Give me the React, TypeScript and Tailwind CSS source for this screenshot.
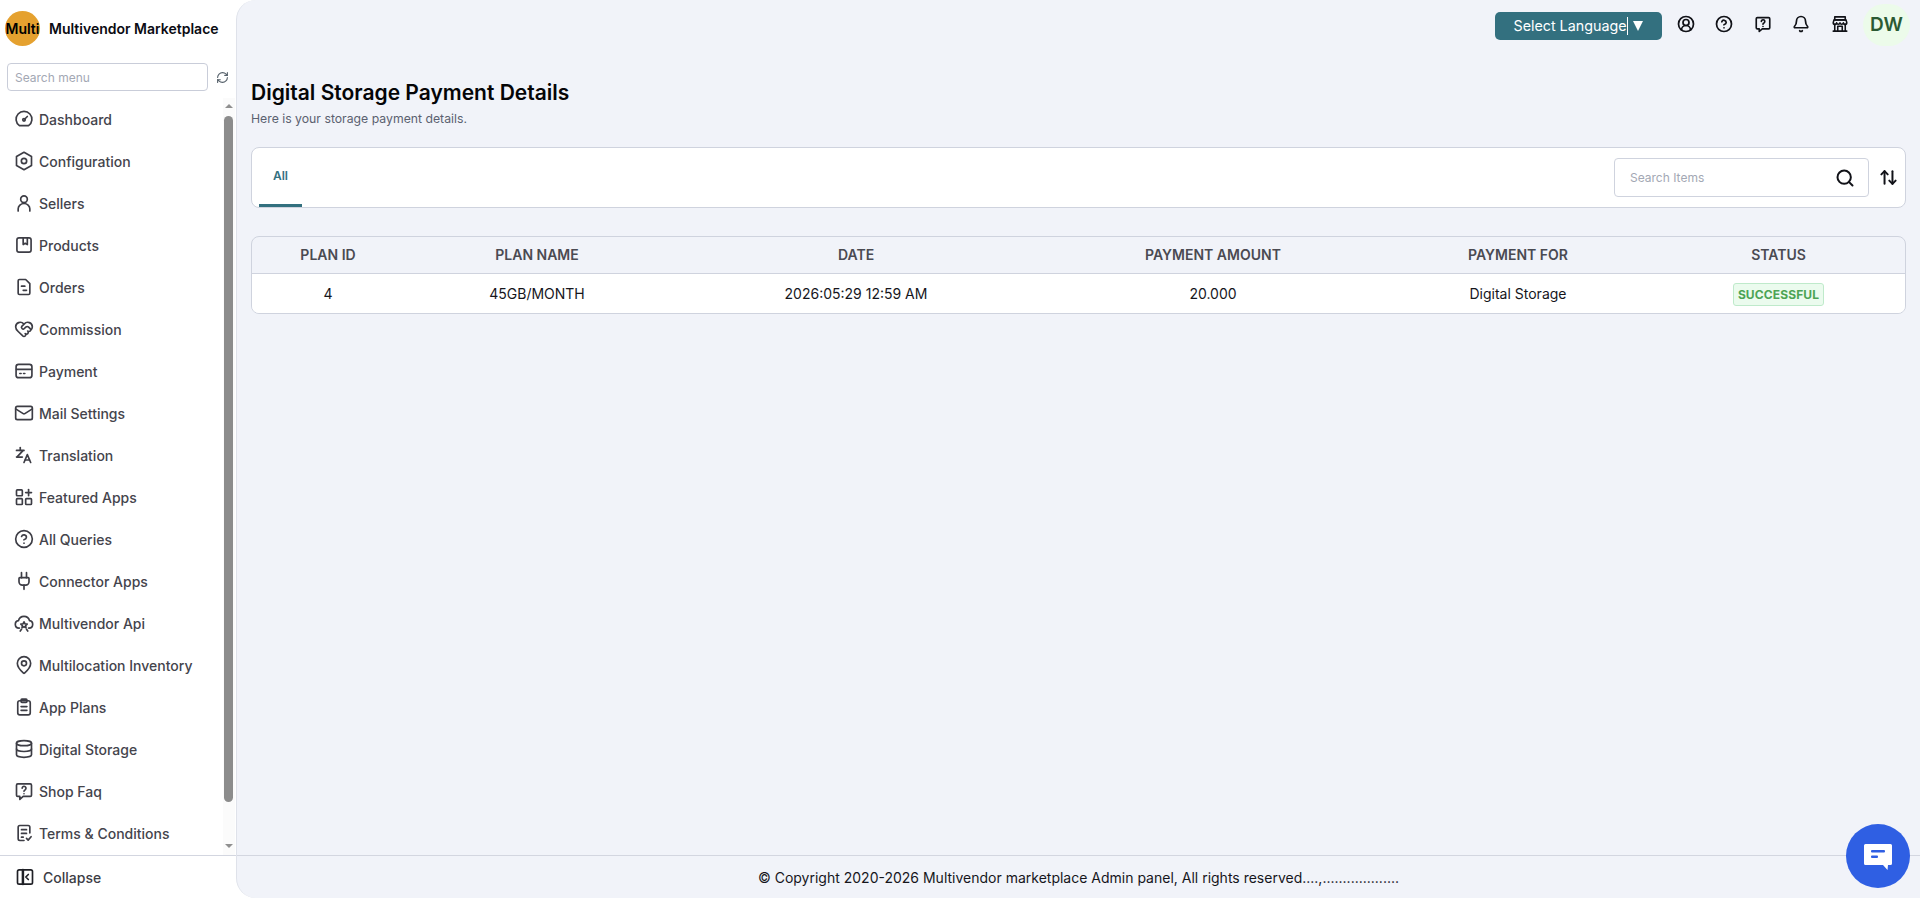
import type { ReactNode } from "react";
import {
  ArrowUpDown,
  Bell,
  CircleHelp,
  CircleUserRound,
  Database,
  HeartHandshake,
  Mail,
  MapPin,
  Plug,
  RefreshCw,
  Search,
} from "lucide-react";

const Svg = ({ children, size = 20, weight = 2 }: { children: ReactNode; size?: number; weight?: number }) => (
  <svg
    width={size}
    height={size}
    viewBox="0 0 24 24"
    fill="none"
    stroke="currentColor"
    strokeWidth={weight}
    strokeLinecap="round"
    strokeLinejoin="round"
  >
    {children}
  </svg>
);

const DashIcon = () => (
  <Svg>
    <path d="M6.500 20h11a9.500 9.500 0 1 0-11 0Z" />
    <circle cx="12" cy="13" r="1.500" />
    <path d="m13 12 3-3" />
  </Svg>
);
const HexIcon = () => (
  <Svg>
    <path d="M12 1.500 21 6.500v11L12 22.500 3 17.500v-11Z" />
    <circle cx="12" cy="12" r="3.200" />
  </Svg>
);
const SellerIcon = () => (
  <Svg>
    <circle cx="12" cy="7.500" r="4" />
    <path d="M5 21.500V19a5.500 5 0 0 1 14 0v2.500" />
  </Svg>
);
const ProductIcon = () => (
  <Svg>
    <rect x="3.500" y="3.500" width="17" height="17" rx="2.500" />
    <path d="M11 4v7.500l2.500-1.500 2.500 1.500V4" />
  </Svg>
);
const OrderIcon = () => (
  <Svg>
    <path d="M5 4.500A1.500 1.500 0 0 1 6.500 3H14l5 5v11.500a1.500 1.500 0 0 1-1.500 1.500h-11A1.500 1.500 0 0 1 5 19.500Z" />
    <path d="M9 11h4" />
    <path d="M11 16h4" />
  </Svg>
);
const CardIcon = () => (
  <Svg>
    <rect x="2.500" y="4" width="19" height="16" rx="3" />
    <path d="M3 10h18" />
    <path d="M7 15h1.500" />
    <path d="M11.500 15H13" />
  </Svg>
);
const TranslateIcon = () => (
  <Svg>
    <path d="M3 6.500h9" />
    <path d="M7.500 3v3.500" />
    <path d="M10.500 7 4 14" />
    <path d="M3 14.500h7" />
    <path d="m12 21 4-9.500 4 9.500" />
    <path d="M13.500 18h5" />
  </Svg>
);
const AppsIcon = () => (
  <Svg>
    <rect x="3" y="3.500" width="7" height="7" rx="1" />
    <rect x="3" y="14" width="7" height="7" rx="1" />
    <rect x="14" y="14" width="7" height="7" rx="1" />
    <path d="M17.500 3v7.500" />
    <path d="M14 6.700h7" />
  </Svg>
);
const CloudStarIcon = () => (
  <Svg size={21}>
    <path d="M6.500 17.500H6a4.500 4.500 0 0 1-.6-8.950 6.800 6.800 0 0 1 13.200 0A4.500 4.500 0 0 1 18 17.500h-.5" />
    <path d="m12 10 1.200 2.400 2.600.4-1.900 1.800.5 2.600-2.400-1.200-2.400 1.200.5-2.600-1.900-1.800 2.600-.4Z" />
    <path d="m9 19-1.500 2" />
    <path d="m15 19 1.500 2" />
  </Svg>
);
const ClipboardIcon = () => (
  <Svg>
    <rect x="4.500" y="4.500" width="15" height="17" rx="2.500" />
    <rect x="8.500" y="2.500" width="7" height="4" rx="1" />
    <path d="M8.500 11.500h7" />
    <path d="M8.500 16h7" />
  </Svg>
);
const FaqBubble = ({ size = 20, weight = 2 }: { size?: number; weight?: number }) => (
  <Svg size={size} weight={weight}>
    <path d="M4.500 3.500h15A1.500 1.500 0 0 1 21 5v12a1.500 1.500 0 0 1-1.500 1.500H11l-4 3.500v-3.500H4.500A1.500 1.500 0 0 1 3 17V5a1.500 1.500 0 0 1 1.500-1.500Z" />
    <path d="M9.800 8.500a2.300 2.300 0 1 1 3.400 2.200c-.8.4-1.200.9-1.200 1.700" />
    <path d="M12 15.300v.01" />
  </Svg>
);
const TermsIcon = () => (
  <Svg>
    <path d="M19 12V5a2 2 0 0 0-2-2H7a2 2 0 0 0-2 2v14a2 2 0 0 0 2 2h5" />
    <path d="M9 8h6" />
    <path d="M9 12.500h6" />
    <path d="M9 17h2" />
    <path d="m15 18.500 2 2 3.500-4" />
  </Svg>
);
const CollapseIcon = () => (
  <Svg>
    <rect x="3" y="3.500" width="18" height="17" rx="2" />
    <path d="M9.500 3.500v17" strokeWidth="3" />
    <path d="m16 9-3 3 3 3" />
  </Svg>
);
const ShopIcon = () => (
  <Svg size={18} weight={2.100}>
    <path d="M5 2.500h14v4H5Z" />
    <path d="M4 6.500h16l1 3.500a2.200 2.200 0 0 1-4.500.5 2.300 2.300 0 0 1-4.500 0 2.300 2.300 0 0 1-4.500 0A2.200 2.200 0 0 1 3 10Z" />
    <path d="M5 12.500v8.500" />
    <path d="M19 12.500v8.500" />
    <path d="M3 21.500h18" />
    <path d="M9 21v-6h6v6" />
  </Svg>
);

const menu: { label: string; icon: ReactNode }[] = [
  { label: "Dashboard", icon: <DashIcon /> },
  { label: "Configuration", icon: <HexIcon /> },
  { label: "Sellers", icon: <SellerIcon /> },
  { label: "Products", icon: <ProductIcon /> },
  { label: "Orders", icon: <OrderIcon /> },
  { label: "Commission", icon: <HeartHandshake size={20} /> },
  { label: "Payment", icon: <CardIcon /> },
  { label: "Mail Settings", icon: <Mail size={20} /> },
  { label: "Translation", icon: <TranslateIcon /> },
  { label: "Featured Apps", icon: <AppsIcon /> },
  { label: "All Queries", icon: <CircleHelp size={20} /> },
  { label: "Connector Apps", icon: <Plug size={20} /> },
  { label: "Multivendor Api", icon: <CloudStarIcon /> },
  { label: "Multilocation Inventory", icon: <MapPin size={20} /> },
  { label: "App Plans", icon: <ClipboardIcon /> },
  { label: "Digital Storage", icon: <Database size={20} /> },
  { label: "Shop Faq", icon: <FaqBubble /> },
  { label: "Terms & Conditions", icon: <TermsIcon /> },
];

const Sidebar = () => (
  <aside className="w-[236px] shrink-0 flex flex-col bg-white">
    <div className="h-[57px] flex items-center pl-[5px] gap-[9px]">
      <div className="w-[35px] h-[35px] rounded-full bg-[#e5a12f] flex items-center justify-center text-[14px] font-semibold text-black">
        Multi
      </div>
      <span className="text-[14px] font-semibold text-[#0b0b12] whitespace-nowrap">
        Multivendor Marketplace
      </span>
    </div>

    <div className="h-[41px] pt-[6px] pl-[7px] flex items-start gap-[8px]">
      <input
        placeholder="Search menu"
        className="w-[201px] h-[28px] px-[7px] border border-[#c9cdd9] rounded-[4px] text-[12px] outline-none placeholder:text-[#a3a8b4]"
      />
      <span className="h-[28px] flex items-center text-[#55606a]">
        <RefreshCw size={13} />
      </span>
    </div>

    <div className="h-[757px] flex">
      <ul className="flex-1">
        {menu.map((item) => (
          <li
            key={item.label}
            className="h-[42px] flex items-center pl-[14px] gap-[5px] text-[14px] font-medium text-[#44444c]"
          >
            <span className="w-5 flex justify-center text-[#3d3d45]">{item.icon}</span>
            {item.label}
          </li>
        ))}
      </ul>
      <div className="w-[12px] mr-[1px] bg-[#fbfbfb] flex flex-col items-center pr-[1px]">
        <div className="mt-[6px] w-0 h-0 border-x-[4px] border-x-transparent border-b-[4px] border-b-[#8f8f8f]" />
        <div className="mt-[8px] h-[686px] w-[9px] rounded-[5px] bg-[#8c8c8c]" />
        <div className="mt-[42px] w-0 h-0 border-x-[4px] border-x-transparent border-t-[4px] border-t-[#8f8f8f]" />
      </div>
    </div>

    <div className="flex-1 border-t border-[#d3d6e0] flex items-center pl-[15px] gap-[8px] text-[14px] font-medium text-[#3d3d45]">
      <span className="text-[#1f2026]">
        <CollapseIcon />
      </span>
      Collapse
    </div>
  </aside>
);

const TopBar = () => (
  <div className="h-[50px] flex items-start justify-end pr-[10px]">
    <button className="mt-[12px] w-[167px] h-[28px] rounded-[5px] bg-[#33707f] text-white text-[14.300px] flex items-center justify-center">
      <span className="border-r border-white leading-[18px]">Select Language</span>
      <span className="ml-[5px] w-0 h-0 border-x-[5.500px] border-x-transparent border-t-[10px] border-t-white" />
    </button>
    <div className="ml-[5px] mt-[15px] flex text-[#111218]">
      <span className="w-[38.500px] flex justify-center"><CircleUserRound size={18} strokeWidth={2.300} /></span>
      <span className="w-[38.500px] flex justify-center"><CircleHelp size={18} strokeWidth={2.300} /></span>
      <span className="w-[38.500px] flex justify-center"><FaqBubble size={18} weight={2.200} /></span>
      <span className="w-[38.500px] flex justify-center"><Bell size={18} strokeWidth={2.300} /></span>
      <span className="w-[38.500px] flex justify-center"><ShopIcon /></span>
    </div>
    <div className="ml-[4px] mt-[4px] w-[47px] h-[42px] rounded-full bg-[#ecfbea] flex items-center justify-center text-[19px] font-semibold text-[#2b5a33]">
      DW
    </div>
  </div>
);

const columns = [
  { title: "PLAN ID", value: "4", width: "w-[152px]" },
  { title: "PLAN NAME", value: "45GB/MONTH", width: "w-[266px]" },
  { title: "DATE", value: "2026:05:29 12:59 AM", width: "w-[372px]" },
  { title: "PAYMENT AMOUNT", value: "20.000", width: "w-[342px]" },
  { title: "PAYMENT FOR", value: "Digital Storage", width: "w-[268px]" },
];

const PaymentTable = () => (
  <div className="mt-[28px] rounded-[8px] border border-[#cfd3de] overflow-hidden">
    <table className="w-full table-fixed border-collapse">
      <thead>
        <tr className="h-[36px] border-b border-[#cfd3de]">
          {columns.map((c) => (
            <th key={c.title} className={`${c.width} text-[14px] font-semibold text-[#4a4a52]`}>
              {c.title}
            </th>
          ))}
          <th className="text-[14px] font-semibold text-[#4a4a52]">STATUS</th>
        </tr>
      </thead>
      <tbody>
        <tr className="h-[40px] bg-white">
          {columns.map((c) => (
            <td key={c.title} className="text-center text-[14px] text-[#16161c]">
              {c.value}
            </td>
          ))}
          <td className="text-center">
            <span className="inline-block px-[4px] h-[23px] leading-[21px] rounded-[3px] border border-[#bfeacb] bg-[#ebfbee] text-[12px] font-bold tracking-[0.01em] text-[#4ca454]">
              SUCCESSFUL
            </span>
          </td>
        </tr>
      </tbody>
    </table>
  </div>
);

const App = () => (
  <div className="h-screen flex bg-white overflow-hidden font-['Inter',sans-serif]">
    <Sidebar />
    <main className="flex-1 min-w-0 flex flex-col bg-[#f1f3f9] border-l border-[#dfe2ea] rounded-l-[20px]">
      <TopBar />
      <div className="flex-1 px-[14px]">
        <h1 className="mt-[30px] text-[21px] leading-[26px] font-semibold text-[#050507]">
          Digital Storage Payment Details
        </h1>
        <p className="mt-[5px] text-[12.250px] leading-[16px] text-[#5b6170]">
          Here is your storage payment details.
        </p>

        <div className="mt-[20px] h-[61px] flex items-stretch justify-between pl-[7px] pr-[7px] bg-white rounded-[8px] border border-[#cfd3de]">
          <div className="w-[43px] flex items-center justify-center border-b-[3px] border-[#33707f] text-[12px] font-semibold text-[#33707f]">
            All
          </div>
          <div className="flex items-center gap-[10px]">
            <div className="w-[255px] h-[39px] flex items-center justify-between pl-[15px] pr-[13px] border border-[#cfd3de] rounded-[4px]">
              <span className="text-[12px] text-[#a3a8b4]">Search Items</span>
              <Search size={20} strokeWidth={2.400} className="text-[#111218]" />
            </div>
            <ArrowUpDown size={19} strokeWidth={2.500} className="text-[#111218]" />
          </div>
        </div>

        <PaymentTable />
      </div>
      <footer className="h-[43px] shrink-0 border-t border-[#d3d6e0] flex items-center justify-center text-[14px] text-[#16161c]">
        © Copyright 2020-2026 Multivendor marketplace Admin panel, All rights reserved....,...................
      </footer>
    </main>

    <div className="fixed left-[1846px] top-[824px] w-[64px] h-[64px] rounded-full bg-[#2f5fe3] flex items-center justify-center">
      <svg width="30" height="30" viewBox="0 0 30 30" fill="none">
        <path d="M1 4.500A1.500 1.500 0 0 1 2.500 3h25A1.500 1.500 0 0 1 29 4.500v18a1.500 1.500 0 0 1-1.500 1.500H25l-.5 5L20 24H2.500A1.500 1.500 0 0 1 1 22.500Z" fill="white" />
        <rect x="8" y="9" width="14" height="2.500" rx="1" fill="#2f5fe3" />
        <rect x="8" y="14.500" width="7" height="2.500" rx="1" fill="#2f5fe3" />
      </svg>
    </div>
  </div>
);

export default App;
